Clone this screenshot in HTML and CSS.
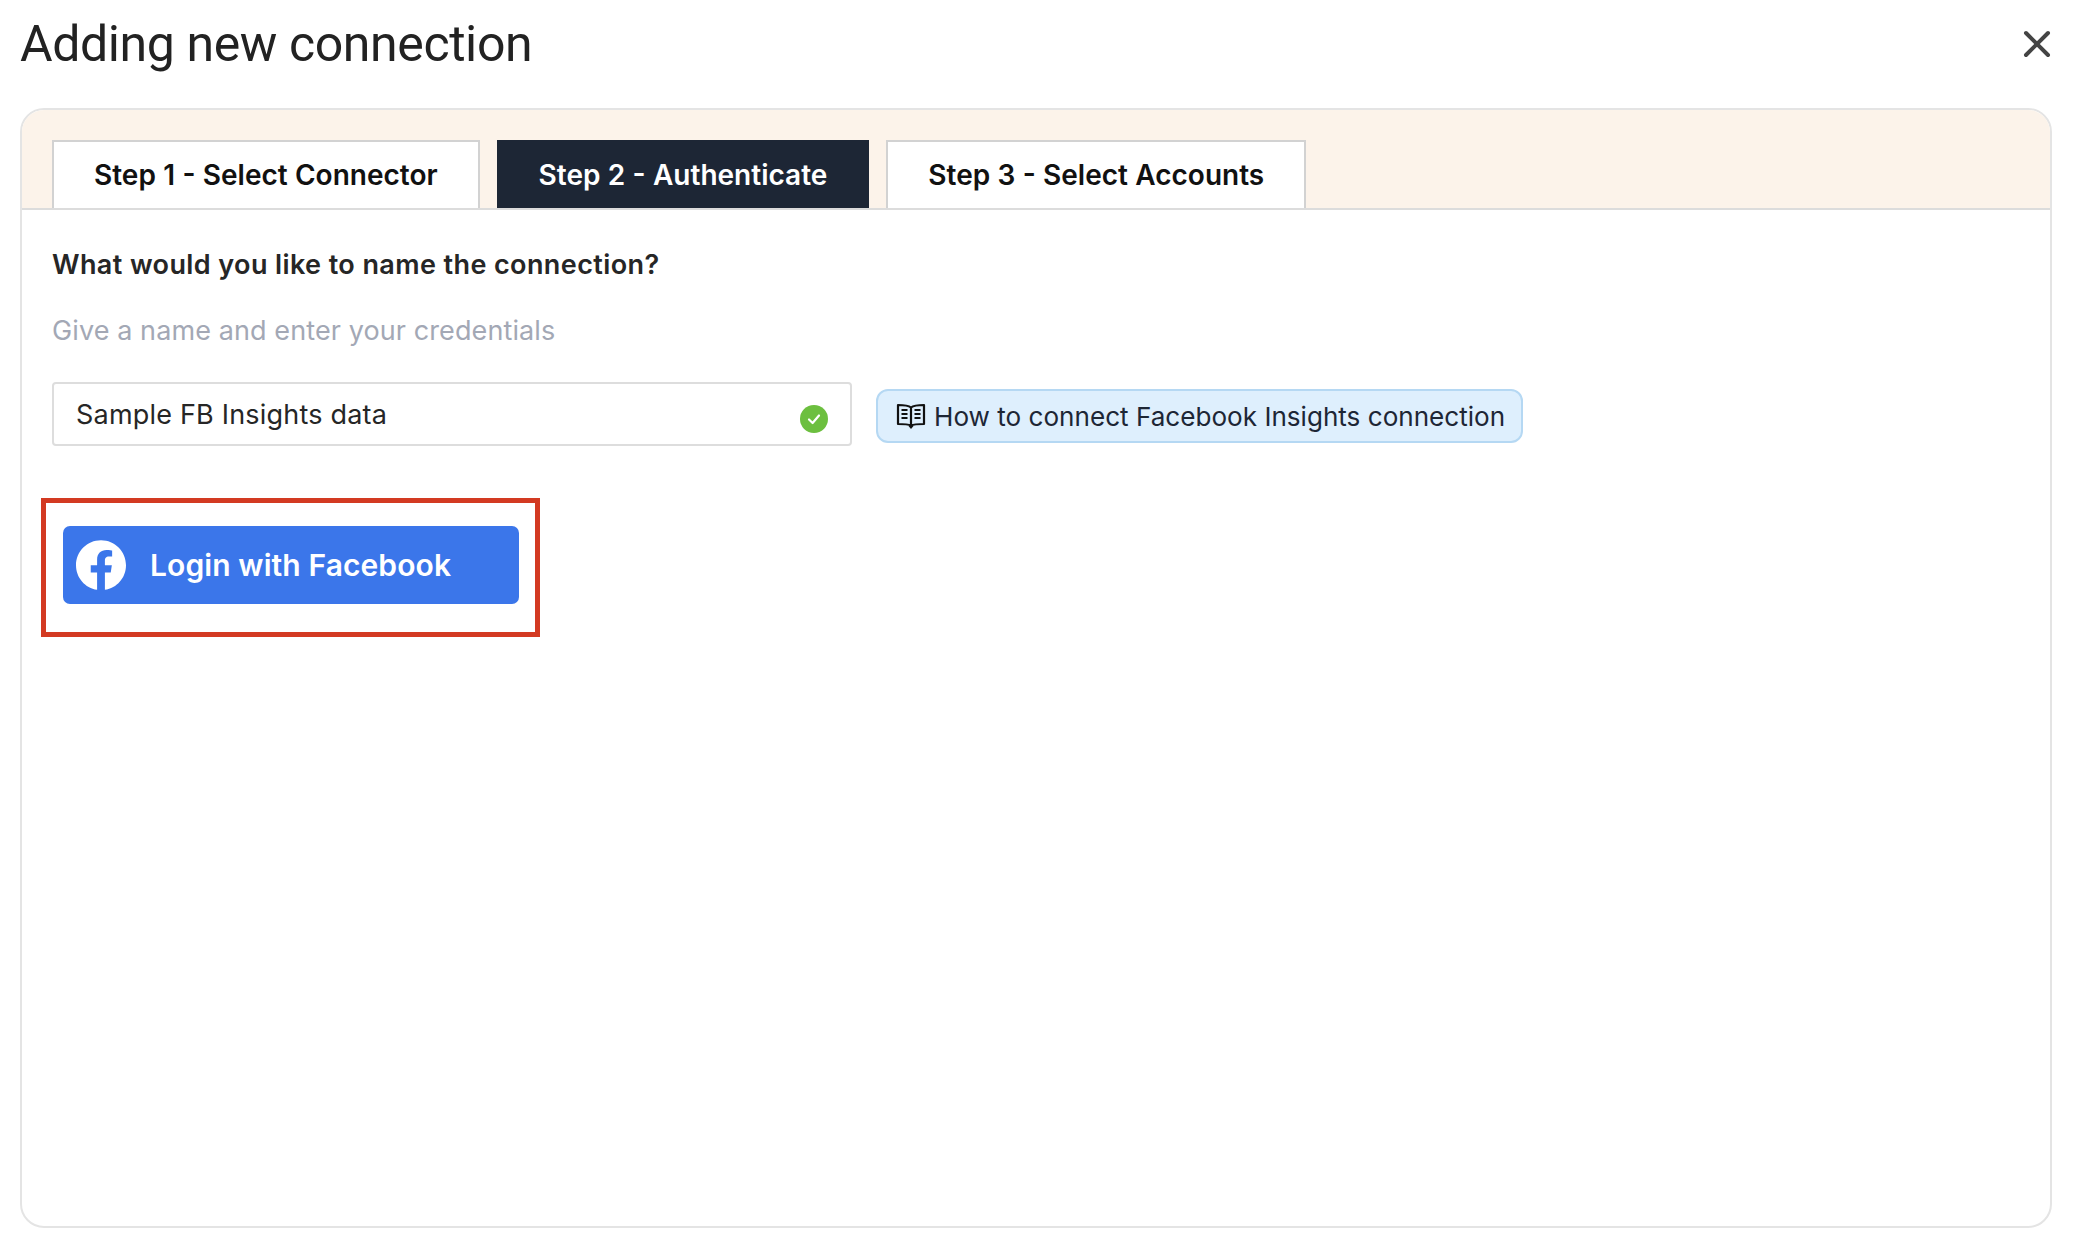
FILE: index.html
```html
<!DOCTYPE html>
<html lang="en">
<head>
<meta charset="utf-8">
<title>Adding new connection</title>
<link rel="stylesheet" href="styles.css">
</head>
<body>
<div class="dialog">
  <header class="dialog-head">
    <h1 class="dialog-title">Adding new connection</h1>
    <button class="close" aria-label="Close">
      <svg width="30" height="30" viewBox="0 0 30 30"><path d="M4 4 L26 26 M26 4 L4 26" fill="none" stroke="#444" stroke-width="4" stroke-linecap="round"/></svg>
    </button>
  </header>
  <section class="panel">
    <nav class="tabs">
      <div class="tab">Step 1 - Select Connector</div>
      <div class="tab tab-active">Step 2 - Authenticate</div>
      <div class="tab">Step 3 - Select Accounts</div>
    </nav>
    <div class="panel-body">
      <h2 class="question">What would you like to name the connection?</h2>
      <p class="hint">Give a name and enter your credentials</p>
      <div class="name-row">
        <div class="name-field">
          <span>Sample FB Insights data</span>
          <svg class="ok" width="28" height="28" viewBox="0 0 28 28"><circle cx="14" cy="14" r="14" fill="#6cbf3f"/><path d="M9 14.5 L12.6 18 L19 10.5" fill="none" stroke="#fff" stroke-width="2.2" stroke-linecap="round" stroke-linejoin="round"/></svg>
        </div>
        <a class="help-chip">
          <svg width="30" height="26" viewBox="0 0 30 26"><path d="M15 4.5 C12.5 2.5 9 2 2 2 V21 C9 21 12.5 21.300 15 22.500 C17.500 21.300 21 21 28 21 V2 C21 2 17.500 2.500 15 4.500 Z M15 4.500 V22.500" fill="none" stroke="#111" stroke-width="2.200" stroke-linejoin="round"/><path d="M5.500 7 H11.500 M5.500 11 H11.500 M5.500 15 H11.500 M18.500 7 H24.500 M18.500 11 H24.500 M18.500 15 H24.500" fill="none" stroke="#111" stroke-width="2"/><path d="M12.500 23 H17.500 L15 26 Z" fill="#111"/></svg>
          <span>How to connect Facebook Insights connection</span>
        </a>
      </div>
      <div class="callout">
        <button class="fb-login">
          <svg width="50" height="50" viewBox="0 0 24 24"><path fill="#fff" d="M24 12.073c0-6.627-5.373-12-12-12s-12 5.373-12 12c0 5.990 4.388 10.954 10.125 11.854v-8.385H7.078v-3.470h3.047V9.430c0-3.007 1.792-4.669 4.533-4.669 1.312 0 2.686.235 2.686.235v2.953H15.830c-1.491 0-1.956.925-1.956 1.874v2.250h3.328l-.532 3.470h-2.796v8.385C19.612 23.027 24 18.062 24 12.073z"/></svg>
          <span>Login with Facebook</span>
        </button>
      </div>
    </div>
  </section>
</div>
</body>
</html>
```

FILE: styles.css
```css
* { box-sizing: border-box; }
html, body { margin: 0; padding: 0; background: #fff; }
body { font-family: Inter, "Liberation Sans", sans-serif; color: #222; }

.dialog { width: 2078px; height: 1254px; padding: 0 26px 0 20px; }

.dialog-head {
  height: 108px;
  display: flex;
  justify-content: space-between;
  align-items: flex-start;
}
.dialog-title {
  margin: 14px 0 0;
  font-family: Roboto, sans-serif;
  font-size: 50px;
  letter-spacing: -0.4px;
  line-height: 60px;
  font-weight: 400;
  color: #222;
}
.close {
  margin: 29px 0 0 0;
  padding: 0;
  border: 0;
  background: none;
  line-height: 0;
}

.panel {
  height: 1120px;
  border: 2px solid #e4e4e4;
  border-radius: 24px;
  overflow: hidden;
}
.tabs {
  height: 100px;
  padding: 30px 0 0 30px;
  display: flex;
  gap: 17px;
  background: #fcf3ea;
  border-bottom: 2px solid #dcdcdc;
}
.tab {
  height: 68px;
  padding: 0 40px;
  display: flex;
  align-items: center;
  background: #fff;
  border: solid #d2d2d2;
  border-width: 2px 2px 0;
  font-size: 28px;
  word-spacing: 0.3px;
  font-weight: 600;
  color: #111;
}
.tab-active { background: #1d2635; border-color: #1d2635; color: #fff; }

.panel-body { padding: 37px 30px; }
.question { margin: 0; font-size: 27px; letter-spacing: 0.4px; line-height: 36px; font-weight: 600; color: #262626; }
.hint { margin: 30px 0 0; font-size: 27px; letter-spacing: 0.1px; line-height: 36px; font-weight: 400; color: #a3a8b5; }

.name-row { margin-top: 33px; display: flex; align-items: flex-start; gap: 24px; }
.name-field {
  width: 800px;
  height: 64px;
  padding: 0 23px 0 22px;
  display: flex;
  align-items: center;
  justify-content: space-between;
  border: 2px solid #dddddd;
  border-radius: 4px;
  font-size: 27px;
  letter-spacing: 0.2px;
  color: #262626;
}
.ok { margin: 9px -1px 0 0; }
.help-chip {
  margin-top: 7px;
  height: 54px;
  padding: 0 16px 0 18px;
  display: flex;
  align-items: center;
  gap: 8px;
  background: #deeffd;
  border: 2px solid #b5d8f3;
  border-radius: 12px;
  font-size: 26.1px;
  color: #1d2635;
}

.callout {
  margin: 52px 0 0 -11px;
  width: 499px;
  height: 139px;
  padding: 23px 16px 23px 17px;
  border: 5px solid #d33a22;
}
.fb-login {
  width: 100%;
  height: 78px;
  padding: 0 0 0 13px;
  display: flex;
  align-items: center;
  gap: 24px;
  border: 0;
  border-radius: 7px;
  background: #3b76ea;
  color: #fff;
  font-family: Inter, sans-serif;
  font-size: 30px;
  letter-spacing: 0.1px;
  font-weight: 600;
}
```
